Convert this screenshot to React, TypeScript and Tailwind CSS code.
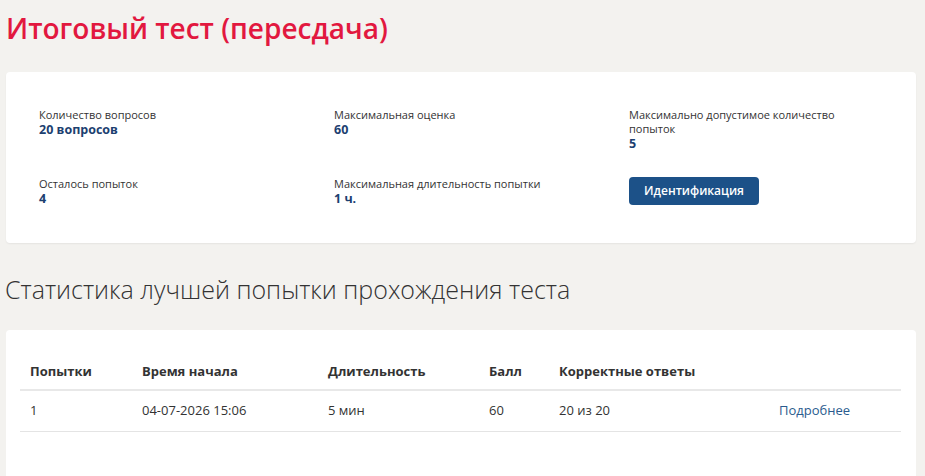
import React from "react";

const font = { fontFamily: '"Open Sans", "Noto Sans", "DejaVu Sans", sans-serif' };

function Item({ label, value, wide }: { label: string; value: string; wide?: boolean }) {
  return (
    <div className={wide ? "w-[215px]" : ""}>
      <div className="text-[11px] leading-[14px] text-[#333333]">{label}</div>
      <div className="text-[12.5px] leading-[15px] font-bold text-[#1c4070]">{value}</div>
    </div>
  );
}

export default function App() {
  const rows = [
    { a: "1", t: "04-07-2026 15:06", d: "5 мин", b: "60", c: "20 из 20" },
  ];
  return (
    <div className="h-[476px] w-[925px] overflow-hidden bg-[#f3f2ef]" style={font}>
      <h1 className="pl-[6px] pt-[9px] text-[28px] leading-[38px] font-semibold text-[#e2183f]">
        Итоговый тест (пересдача)
      </h1>
      <div className="mx-[6px] mt-[25px] w-[910px] rounded-[4px] bg-white pl-[33px] pt-[36px] pb-[37px] shadow-[0_1px_2px_rgba(0,0,0,0.06)]">
        <div className="grid grid-cols-[295px_295px_1fr] gap-y-[26px]">
          <Item label="Количество вопросов" value="20 вопросов" />
          <Item label="Максимальная оценка" value="60" />
          <Item label="Максимально допустимое количество попыток" value="5" wide />
          <Item label="Осталось попыток" value="4" />
          <Item label="Максимальная длительность попытки" value="1 ч." />
          <div>
            <button className="h-[28px] w-[130px] rounded-[4px] bg-[#1c5188] text-[12px] font-semibold text-white">
              Идентификация
            </button>
          </div>
        </div>
      </div>
      <h2 className="pl-[5px] mt-[29px] text-[25px] leading-[34px] font-light text-[#333333]">
        Статистика лучшей попытки прохождения теста
      </h2>
      <div className="mx-[6px] mt-[24px] w-[910px] rounded-t-[4px] bg-white px-[14px] pt-[25px] pb-[45px]">
        <table className="w-[881px] table-fixed border-collapse text-[13px] text-[#333333]">
          <colgroup>
            <col className="w-[112px]" />
            <col className="w-[186px]" />
            <col className="w-[161px]" />
            <col className="w-[70px]" />
            <col className="w-[220px]" />
            <col />
          </colgroup>
          <thead>
            <tr className="border-b-2 border-[#e8e8e8]">
              <th className="h-[35px] pl-[10px] text-left font-bold">Попытки</th>
              <th className="pl-[10px] text-left font-bold">Время начала</th>
              <th className="pl-[10px] text-left font-bold">Длительность</th>
              <th className="pl-[10px] text-left font-bold">Балл</th>
              <th className="pl-[10px] text-left font-bold">Корректные ответы</th>
              <th></th>
            </tr>
          </thead>
          <tbody>
            {rows.map((r) => (
              <tr key={r.a} className="border-b border-[#e4e4e4]">
                <td className="h-[41px] pl-[10px]">{r.a}</td>
                <td className="pl-[10px]">{r.t}</td>
                <td className="pl-[10px]">{r.d}</td>
                <td className="pl-[10px]">{r.b}</td>
                <td className="pl-[10px]">{r.c}</td>
                <td className="pl-[10px]">
                  <a className="text-[#2a5b8e]" href="#">Подробнее</a>
                </td>
              </tr>
            ))}
          </tbody>
        </table>
      </div>
    </div>
  );
}
